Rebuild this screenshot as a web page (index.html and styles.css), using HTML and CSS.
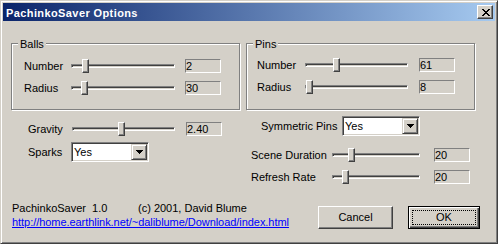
FILE: index.html
```html
<!DOCTYPE html>
<html lang="en">
<head>
	<meta charset="UTF-8">
	<title>PachinkoSaver Options</title>
	<link rel="stylesheet" href="styles.css">
</head>
<body>
	<div class="window">
		<div class="titlebar">
			<span class="title">PachinkoSaver Options</span>
			<span class="close-btn">
				<svg width="8" height="7" viewBox="0 0 8 7" shape-rendering="crispEdges">
					<path d="M0 0h2v1h-2zM6 0h2v1h-2zM1 1h2v1h-2zM5 1h2v1h-2zM2 2h4v1h-4zM3 3h2v1h-2zM2 4h4v1h-4zM1 5h2v1h-2zM5 5h2v1h-2zM0 6h2v1h-2zM6 6h2v1h-2z" fill="#000"/>
				</svg>
			</span>
		</div>
		<div class="client">
			<div class="groups">
				<div class="group balls">
					<span class="group-label">Balls</span>
					<div class="row">
						<span class="lbl">Number</span>
						<div class="slider"><span class="thumb" style="left:11px"></span></div>
						<span class="edit">2</span>
					</div>
					<div class="row">
						<span class="lbl">Radius</span>
						<div class="slider"><span class="thumb" style="left:10px"></span></div>
						<span class="edit">30</span>
					</div>
				</div>
				<div class="group pins">
					<span class="group-label">Pins</span>
					<div class="row">
						<span class="lbl">Number</span>
						<div class="slider"><span class="thumb" style="left:28px"></span></div>
						<span class="edit">61</span>
					</div>
					<div class="row">
						<span class="lbl">Radius</span>
						<div class="slider"><span class="thumb" style="left:1px"></span></div>
						<span class="edit">8</span>
					</div>
				</div>
			</div>
			<div class="middle">
				<div class="col-left">
					<div class="row gravity-row">
						<span class="lbl">Gravity</span>
						<div class="slider"><span class="thumb" style="left:46px"></span></div>
						<span class="edit">2.40</span>
					</div>
					<div class="row sparks-row">
						<span class="lbl">Sparks</span>
						<div class="combo">
							<span class="combo-text">Yes</span>
							<span class="combo-btn">
								<svg width="7" height="4" viewBox="0 0 7 4" shape-rendering="crispEdges">
									<path d="M0 0h7v1h-1v1h-1v1h-1v1h-1v-1h-1v-1h-1v-1h-1z" fill="#000"/>
								</svg>
							</span>
						</div>
					</div>
				</div>
				<div class="col-right">
					<div class="row sym-row">
						<span class="lbl">Symmetric Pins</span>
						<div class="combo">
							<span class="combo-text">Yes</span>
							<span class="combo-btn">
								<svg width="7" height="4" viewBox="0 0 7 4" shape-rendering="crispEdges">
									<path d="M0 0h7v1h-1v1h-1v1h-1v1h-1v-1h-1v-1h-1v-1h-1z" fill="#000"/>
								</svg>
							</span>
						</div>
					</div>
					<div class="row scene-row">
						<span class="lbl">Scene Duration</span>
						<div class="slider"><span class="thumb" style="left:16px"></span></div>
						<span class="edit">20</span>
					</div>
					<div class="row refresh-row">
						<span class="lbl">Refresh Rate</span>
						<div class="slider"><span class="thumb" style="left:10px"></span></div>
						<span class="edit">20</span>
					</div>
				</div>
			</div>
			<div class="footer">
				<div class="about">
					<div class="about-line">
						<span class="version">PachinkoSaver&nbsp; 1.0</span>
						<span>(c) 2001, David Blume</span>
					</div>
					<a class="link" href="#">http://home.earthlink.net/~daliblume/Download/index.html</a>
				</div>
				<div class="buttons">
					<span class="btn cancel">Cancel</span>
					<span class="btn ok"><span class="focus">OK</span></span>
				</div>
			</div>
		</div>
	</div>
</body>
</html>
```

FILE: styles.css
```css
body {
	margin: 0;
	font-family: "Liberation Sans", Arial, sans-serif;
	font-size: 11px;
	color: #000;
}
.window {
	width: 498px;
	height: 244px;
	box-sizing: border-box;
	background: #d4d0c8;
	border: 1px solid;
	border-color: #d4d0c8 #404040 #404040 #d4d0c8;
	box-shadow: inset 1px 1px #fff, inset -1px -1px #808080;
	padding: 2px;
}
.titlebar {
	height: 18px;
	display: flex;
	align-items: flex-start;
	background: linear-gradient(to right, #0a246a, #a6caf0);
}
.title {
	color: #fff;
	font-weight: bold;
	line-height: 13px;
	letter-spacing: 0.4px;
	padding: 4px 0 0 3px;
}
.close-btn {
	margin: 2px 2px 0 auto;
	width: 16px;
	height: 14px;
	box-sizing: border-box;
	background: #d4d0c8;
	border: 1px solid;
	border-color: #fff #404040 #404040 #fff;
	box-shadow: inset -1px -1px #808080;
	display: flex;
	align-items: flex-start;
	padding: 3px 0 0 4px;
}
.close-btn svg {
	display: block;
}
.client {
	padding: 0 15px 0 8px;
}
.groups {
	display: flex;
	gap: 6px;
	margin-top: 22px;
}
.group {
	position: relative;
	width: 229px;
	height: 67px;
	box-sizing: border-box;
	border: 1px solid #808080;
	box-shadow: 1px 1px #fff, inset 1px 1px #fff;
	padding-top: 11px;
}
.group-label {
	position: absolute;
	top: -6px;
	left: 6px;
	padding: 0 2px;
	line-height: 13px;
	background: #d4d0c8;
}
.balls {
	padding-left: 12px;
}
.pins {
	padding-left: 10px;
	padding-top: 10px;
}
.row {
	display: flex;
	align-items: center;
	height: 22px;
}
.lbl {
	line-height: 13px;
	white-space: nowrap;
	flex-shrink: 0;
}
.balls .lbl {
	width: 47px;
}
.balls .slider {
	width: 104px;
}
.pins .lbl {
	width: 48px;
}
.pins .slider {
	width: 103px;
}
.slider {
	position: relative;
	height: 14px;
	flex-shrink: 0;
}
.slider::before {
	content: "";
	position: absolute;
	left: 0;
	right: 0;
	top: 5px;
	height: 4px;
	box-sizing: border-box;
	border: 1px solid;
	border-color: #808080 #fff #fff #808080;
	box-shadow: inset 1px 1px #404040, inset -1px -1px #d4d0c8;
}
.thumb {
	position: absolute;
	top: 0;
	width: 7px;
	height: 14px;
	box-sizing: border-box;
	background: #d4d0c8;
	border: 1px solid;
	border-color: #fff #404040 #404040 #fff;
	box-shadow: inset -1px -1px #808080;
}
.edit {
	width: 36px;
	height: 14px;
	box-sizing: border-box;
	border: 1px solid;
	border-color: #808080 #fff #fff #808080;
	line-height: 12px;
	margin-left: 10px;
	flex-shrink: 0;
}
.pins .edit {
	margin-left: 11px;
}
.middle {
	display: flex;
	height: 68px;
	margin-top: 6px;
}
.col-left {
	width: 240px;
	box-sizing: border-box;
	padding: 6px 0 0 17px;
}
.gravity-row {
	height: 14px;
}
.gravity-row .lbl {
	width: 44px;
}
.gravity-row .slider {
	width: 103px;
}
.gravity-row .edit {
	margin-left: 11px;
}
.sparks-row {
	height: 20px;
	margin-top: 6px;
}
.sparks-row .lbl {
	width: 43px;
}
.combo {
	width: 78px;
	height: 20px;
	box-sizing: border-box;
	border: 1px solid;
	border-color: #808080 #fff #fff #808080;
	box-shadow: inset 1px 1px #404040, inset -1px -1px #d4d0c8;
	background: #fff;
	padding: 1px;
	display: flex;
}
.combo-text {
	flex: 1;
	padding-left: 1px;
	line-height: 16px;
}
.combo-btn {
	width: 16px;
	height: 16px;
	box-sizing: border-box;
	background: #d4d0c8;
	border: 1px solid;
	border-color: #d4d0c8 #404040 #404040 #d4d0c8;
	box-shadow: inset 1px 1px #fff, inset -1px -1px #808080;
	display: flex;
	align-items: center;
	justify-content: center;
}
.combo-btn svg {
	display: block;
}
.sym-row {
	height: 20px;
}
.sym-row .lbl {
	width: 81px;
	margin-left: 10px;
}
.scene-row, .refresh-row {
	height: 14px;
}
.scene-row {
	margin-top: 12px;
}
.refresh-row {
	margin-top: 8px;
}
.scene-row .lbl, .refresh-row .lbl {
	width: 81px;
}
.scene-row .slider, .refresh-row .slider {
	width: 88px;
}
.scene-row .edit, .refresh-row .edit {
	margin-left: 14px;
}
.footer {
	display: flex;
	align-items: flex-start;
	margin-top: 17px;
	padding-left: 1px;
}
.about {
	line-height: 14px;
}
.about-line {
	display: flex;
}
.version {
	width: 126px;
}
.link {
	color: #0000ff;
	text-decoration: underline;
	letter-spacing: -0.05px;
	display: block;
}
.buttons {
	margin: 5px 0 0 auto;
	display: flex;
	gap: 15px;
}
.btn {
	height: 23px;
	box-sizing: border-box;
	display: flex;
	align-items: center;
	justify-content: center;
	line-height: 13px;
	background: #d4d0c8;
}
.cancel {
	width: 75px;
	border: 1px solid;
	border-color: #fff #404040 #404040 #fff;
	box-shadow: inset -1px -1px #808080;
}
.ok {
	width: 72px;
	border: 1px solid #000;
	box-shadow: inset 1px 1px #fff, inset -1px -1px #404040, inset -2px -2px #808080;
	padding: 3px;
}
.focus {
	flex: 1;
	align-self: stretch;
	border: 1px dotted #000;
	display: flex;
	align-items: center;
	justify-content: center;
}
```
